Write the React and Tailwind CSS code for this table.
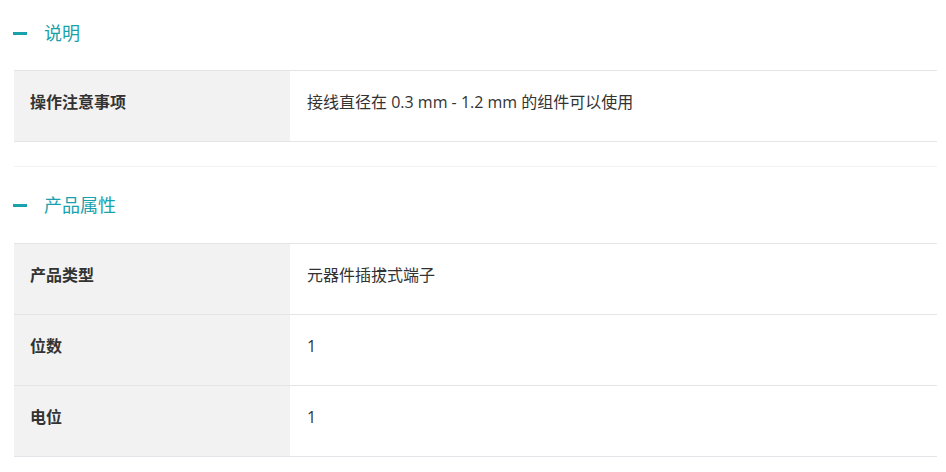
import React from 'react';

const sections = [
  {
    title: '说明',
    rows: [{ label: '操作注意事项', value: '接线直径在 0.3 mm - 1.2 mm 的组件可以使用' }],
  },
  {
    title: '产品属性',
    rows: [
      { label: '产品类型', value: '元器件插拔式端子' },
      { label: '位数', value: '1' },
      { label: '电位', value: '1' },
    ],
  },
];

const SectionHeader = ({ title, first }) => (
  <div className={`flex items-center ${first ? 'h-[70px] pb-[4px]' : 'h-[76px]'}`}>
    <span className="ml-[-1px] block h-[3px] w-[14px] bg-[#1aa1ac]"></span>
    <span className="ml-[17px] text-[18px] leading-none text-[#1aa1ac]">{title}</span>
  </div>
);

const Row = ({ label, value }) => (
  <div className="flex h-[71px] border-b border-[#e4e4e9]">
    <div className="flex w-[276px] shrink-0 items-center bg-[#f2f2f2] pb-[8px] pl-[16px] text-[16px] font-bold text-[#333]">
      {label}
    </div>
    <div className="flex items-center pb-[8px] pl-[17px] text-[16px] text-[#333]">{value}</div>
  </div>
);

export default function App() {
  return (
    <div
      className="min-h-[472px] bg-white pl-[14px] pr-[9px]"
      style={{ fontFamily: '"Open Sans", "Noto Sans CJK SC", sans-serif' }}
    >
      {sections.map((s, i) => (
        <div key={s.title} className={i > 0 ? 'mt-[24px] border-t border-[#f2f2f2]' : ''}>
          <SectionHeader title={s.title} first={i === 0} />
          <div className="border-t border-[#e4e4e9]">
            {s.rows.map((r) => (
              <Row key={r.label} label={r.label} value={r.value} />
            ))}
          </div>
        </div>
      ))}
    </div>
  );
}
